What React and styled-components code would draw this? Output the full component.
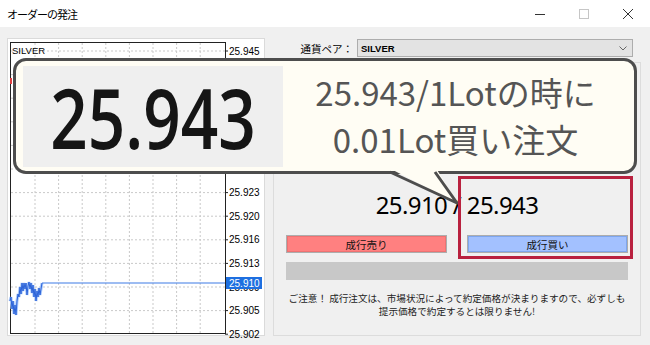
import React from "react";
import styled, { createGlobalStyle } from "styled-components";

const GlobalStyle = createGlobalStyle`
  html, body {
    margin: 0;
    padding: 0;
  }
  body {
    background: #f0f0f0;
    font-family: "Noto Sans CJK JP", "Noto Sans", sans-serif;
    overflow: hidden;
  }
`;

// price scale; labels hidden under the callout are skipped
const labels = [
  "25.945", "25.941", "25.938", "25.934", "25.931", "25.927", "25.923",
  "25.920", "25.916", "25.913", "25.909", "25.905", "25.902",
];
const hidden = [1, 2, 3, 4, 5];
const gridX = [27, 50.6, 74.2, 97.8, 121.4, 145, 168.6, 192.2];
const squiggle =
  "2,262 3,258 4,270 5,262 6,275 7,266 8,276 9,262 10,255 11,258 12,248 13,255 14,244 15,252 16,244 17,250 18,244 19,256 20,247 21,243 22,250 23,244 24,254 25,246 26,258 27,250 28,262 29,252 30,258 31,249 32,256 33,250 34,244";

function Chart() {
  const ys = labels.map((_, i) => 12 + 23.6 * i);
  return (
    <ChartSvg width="256" height="296" viewBox="0 0 256 296">
      {ys.slice(0, 12).map((y) => (
        <line key={"h" + y} x1="3" x2="217" y1={y} y2={y} stroke="#c9c9c9" strokeDasharray="2 2" />
      ))}
      {gridX.map((x) => (
        <line key={"v" + x} x1={x} x2={x} y1="4" y2="294" stroke="#c9c9c9" strokeDasharray="2 2" />
      ))}
      <rect x="2.5" y="3.5" width="215" height="291" fill="none" stroke="#222" />
      {ys.map((y) => (
        <line key={"t" + y} x1="217" x2="220" y1={y} y2={y} stroke="#222" />
      ))}
      {labels.map((l, i) =>
        hidden.includes(i) ? null : (
          <AxisText key={l} x="221" y={ys[i] + 3.5}>{l}</AxisText>
        )
      )}
      <text x="4" y="15" fontSize="9.5" fontFamily="Liberation Sans, sans-serif" fill="#000">SILVER</text>
      <rect x="2" y="39" width="2" height="6" fill="#e04040" />
      <polyline points={squiggle} fill="none" stroke="#a9c8fb" strokeWidth="3" />
      <polyline points={squiggle} fill="none" stroke="#2a62d8" strokeWidth="1" />
      <line x1="34" x2="217" y1="244" y2="244" stroke="#3d7be6" strokeWidth="1.2" />
      <rect x="218" y="238" width="36" height="12" fill="#1e6fe0" />
      <AxisText x="221" y="247.5" fill="#fff">25.910</AxisText>
    </ChartSvg>
  );
}

export default function App() {
  return (
    <Root>
      <GlobalStyle />
      <TitleBar>
        <Title>オーダーの発注</Title>
        <Controls>
          <CtrlButton>
            <svg width="10" height="10" viewBox="0 0 10 10">
              <line x1="0" x2="10" y1="5.5" y2="5.5" stroke="#333" />
            </svg>
          </CtrlButton>
          <CtrlButton>
            <svg width="10" height="10" viewBox="0 0 10 10">
              <rect x="0.5" y="0.5" width="9" height="9" fill="none" stroke="#c6c6c6" />
            </svg>
          </CtrlButton>
          <CtrlButton>
            <svg width="10" height="10" viewBox="0 0 10 10">
              <path d="M0 0 L10 10 M10 0 L0 10" stroke="#333" strokeWidth="1" />
            </svg>
          </CtrlButton>
        </Controls>
      </TitleBar>

      <Body>
        <ChartPanel>
          <Chart />
        </ChartPanel>

        <RightColumn>
          <PairRow>
            <PairLabel>通貨ペア：</PairLabel>
            <Select>
              <SelectText>SILVER</SelectText>
              <svg width="8" height="5" viewBox="0 0 8 5">
                <path d="M0.5 0.5 L4 4 L7.5 0.5" fill="none" stroke="#666" />
              </svg>
            </Select>
          </PairRow>

          <OrderPanel>
            <PriceRow>25.910 / 25.943</PriceRow>
            <ButtonRow>
              <OrderButton $side="sell">成行売り</OrderButton>
              <OrderButton $side="buy">成行買い</OrderButton>
            </ButtonRow>
            <ProgressBar />
            <Notice>
              ご注意！ 成行注文は、市場状況によって約定価格が決まりますので、必ずしも
              <br />
              提示価格で約定するとは限りません!
            </Notice>
          </OrderPanel>
        </RightColumn>
      </Body>

      <Bubble>
        <ZoomBox>
          <BigPrice>25.943</BigPrice>
        </ZoomBox>
        <BubbleText>
          25.943/1Lotの時に
          <br />
          0.01Lot買い注文
        </BubbleText>
      </Bubble>
      <Tail width="80" height="42" viewBox="0 0 80 42">
        <polygon points="4,3 51,3 72,38" fill="#fffdf4" />
        <polyline points="5,7 72,38 50,7" fill="none" stroke="#4d4d4d" strokeWidth="3" strokeLinejoin="round" />
      </Tail>
      <Highlight />
    </Root>
  );
}

const Root = styled.div`
  position: relative;
  width: 650px;
  height: 345px;
  overflow: hidden;
`;

const TitleBar = styled.div`
  height: 27px;
  background: #ffffff;
  display: flex;
  align-items: center;
  justify-content: space-between;
  padding-left: 7px;
`;

const Title = styled.div`
  font-size: 11px;
  letter-spacing: -1px;
  color: #000;
`;

const Controls = styled.div`
  display: flex;
  height: 100%;
`;

const CtrlButton = styled.div`
  width: 44px;
  height: 100%;
  display: flex;
  align-items: center;
  justify-content: center;
`;

const Body = styled.div`
  display: flex;
  gap: 8px;
  padding: 11px 9px 0 7px;
`;

const ChartPanel = styled.div`
  width: 256px;
  height: 296px;
  border: 1px solid #dadada;
  background: #ffffff;
`;

const ChartSvg = styled.svg`
  display: block;
  overflow: visible;
`;

const AxisText = styled.text`
  font-family: "Liberation Sans", sans-serif;
  font-size: 10px;
  fill: ${(p) => p.fill || "#000"};
`;

const RightColumn = styled.div`
  width: 368px;
  display: flex;
  flex-direction: column;
`;

const PairRow = styled.div`
  display: flex;
  align-items: center;
  justify-content: flex-end;
  gap: 4px;
  margin-top: 1px;
  padding-right: 8px;
  height: 18px;
`;

const PairLabel = styled.div`
  font-size: 10.5px;
  color: #000;
`;

const Select = styled.div`
  box-sizing: border-box;
  width: 276px;
  height: 18px;
  border: 1px solid #adadad;
  background: #e3e3e3;
  display: flex;
  align-items: center;
  justify-content: space-between;
  padding: 0 5px 0 3px;
`;

const SelectText = styled.span`
  font-family: "Liberation Sans", sans-serif;
  font-weight: bold;
  font-size: 9.5px;
  color: #000;
`;

const OrderPanel = styled.div`
  box-sizing: border-box;
  margin-top: 5px;
  height: 274px;
  border: 1px solid #dcdcdc;
  display: flex;
  flex-direction: column;
  justify-content: flex-end;
  padding: 0 12px 17px 12px;
`;

const PriceRow = styled.div`
  height: 32px;
  line-height: 32px;
  text-align: center;
  font-family: "Noto Sans", sans-serif;
  font-size: 24px;
  letter-spacing: -0.6px;
  color: #000;
`;

const ButtonRow = styled.div`
  margin-top: 14px;
  display: grid;
  grid-template-columns: 1fr 1fr;
  gap: 20px;
`;

const OrderButton = styled.div`
  box-sizing: border-box;
  height: 18px;
  border: 1px solid #adadad;
  background: ${(p) => (p.$side === "sell" ? "#ff8080" : "#a3c1ff")};
  box-shadow: inset 0 0 0 1px ${(p) => (p.$side === "sell" ? "#ee7272" : "#7ea6ee")};
  display: flex;
  align-items: center;
  justify-content: center;
  font-size: 10.5px;
  color: #111;
`;

const ProgressBar = styled.div`
  margin-top: 9px;
  height: 18px;
  background: #c8c8c8;
`;

const Notice = styled.div`
  margin-top: 12px;
  font-size: 9.6px;
  line-height: 13px;
  text-align: center;
  color: #222;
  white-space: nowrap;
`;

const Bubble = styled.div`
  position: absolute;
  left: 13px;
  top: 58px;
  width: 624px;
  height: 116px;
  box-sizing: border-box;
  border: 3px solid #4d4d4d;
  border-radius: 13px;
  background: #fffdf4;
  display: flex;
  align-items: center;
  padding-left: 7px;
`;

const ZoomBox = styled.div`
  width: 260px;
  height: 101px;
  background: #efefef;
  display: flex;
  align-items: center;
  justify-content: center;
`;

const BigPrice = styled.span`
  display: inline-block;
  font-family: "Open Sans", sans-serif;
  font-weight: 600;
  font-size: 83px;
  line-height: 1;
  color: #151515;
  transform: scaleX(0.79);
`;

const BubbleText = styled.div`
  flex: 1;
  padding-right: 6px;
  text-align: center;
  font-size: 33px;
  line-height: 47px;
  color: #555555;
  white-space: nowrap;
`;

const Tail = styled.svg`
  position: absolute;
  left: 385px;
  top: 165px;
`;

const Highlight = styled.div`
  position: absolute;
  left: 458px;
  top: 176px;
  width: 175px;
  height: 83px;
  box-sizing: border-box;
  border: 3px solid #b9213f;
`;
